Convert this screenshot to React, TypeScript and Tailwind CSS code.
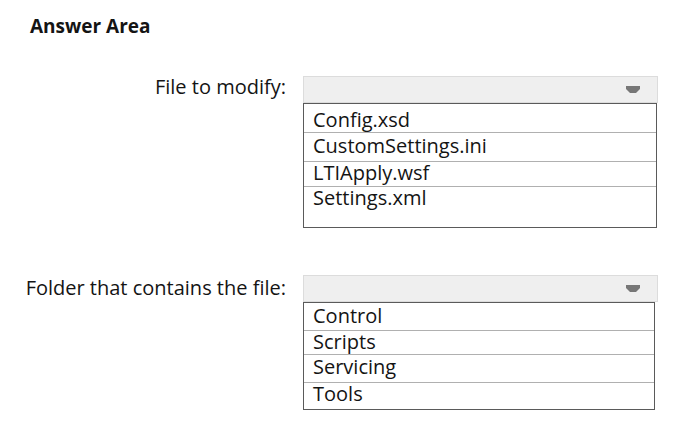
import React from "react";

function Arrow() {
  return (
    <svg width="14" height="8" viewBox="0 0 14 8" className="block">
      <path d="M0 0 H14 V3 L10 7 H4 L0 3 Z" fill="#777777" />
    </svg>
  );
}

type Item = { label: string; h: string; pad: string };

function Dropdown({ items, extra, listWidth }: { items: Item[]; extra: string; listWidth: string }) {
  return (
    <div className="flex flex-col">
      <div className="h-[27px] w-[355px] bg-[#efefef] border border-[#dcdcdc] flex items-center justify-end pr-[17px]">
        <Arrow />
      </div>
      <div className={`border border-[#5a5a5a] bg-white flex flex-col ${listWidth}`}>
        {items.map((it, i) => (
          <div
            key={it.label}
            className={`pl-[9px] text-[20px] text-[#141414] ${it.h} ${it.pad} ${i < items.length - 1 ? "border-b border-[#b0b0b0]" : ""}`}
          >
            {it.label}
          </div>
        ))}
        {extra && <div className={extra} />}
      </div>
    </div>
  );
}

export default function App() {
  return (
    <div className="w-[691px] h-[426px] bg-white text-[#141414]" style={{ fontFamily: '"Open Sans", sans-serif' }}>
      <div className="pl-[30px] pt-[13px] text-[19px] font-bold leading-[26px]">Answer Area</div>
      <div className="flex items-start mt-[37px]">
        <div className="w-[303px] pr-[17px] text-right text-[20px] leading-[22px]">File to modify:</div>
        <Dropdown
          items={[
            { label: "Config.xsd", h: "h-[29px]", pad: "pt-[4px] leading-[24px]" },
            { label: "CustomSettings.ini", h: "h-[29px]", pad: "pt-[1px] leading-[24px]" },
            { label: "LTIApply.wsf", h: "h-[25px]", pad: "leading-[22px]" },
            { label: "Settings.xml", h: "h-[26px]", pad: "leading-[22px]" },
          ]}
          extra="h-[14px]"
          listWidth="w-[354px]"
        />
      </div>
      <div className="flex items-start mt-[47px]">
        <div className="w-[303px] pr-[17px] text-right text-[20px] leading-[24px] pt-[1px]">Folder that contains the file:</div>
        <Dropdown
          items={[
            { label: "Control", h: "h-[28px]", pad: "pt-[1px] leading-[24px]" },
            { label: "Scripts", h: "h-[24px]", pad: "leading-[22px]" },
            { label: "Servicing", h: "h-[28px]", pad: "leading-[24px]" },
            { label: "Tools", h: "h-[26px]", pad: "leading-[21px]" },
          ]}
          extra=""
          listWidth="w-[352px]"
        />
      </div>
    </div>
  );
}
